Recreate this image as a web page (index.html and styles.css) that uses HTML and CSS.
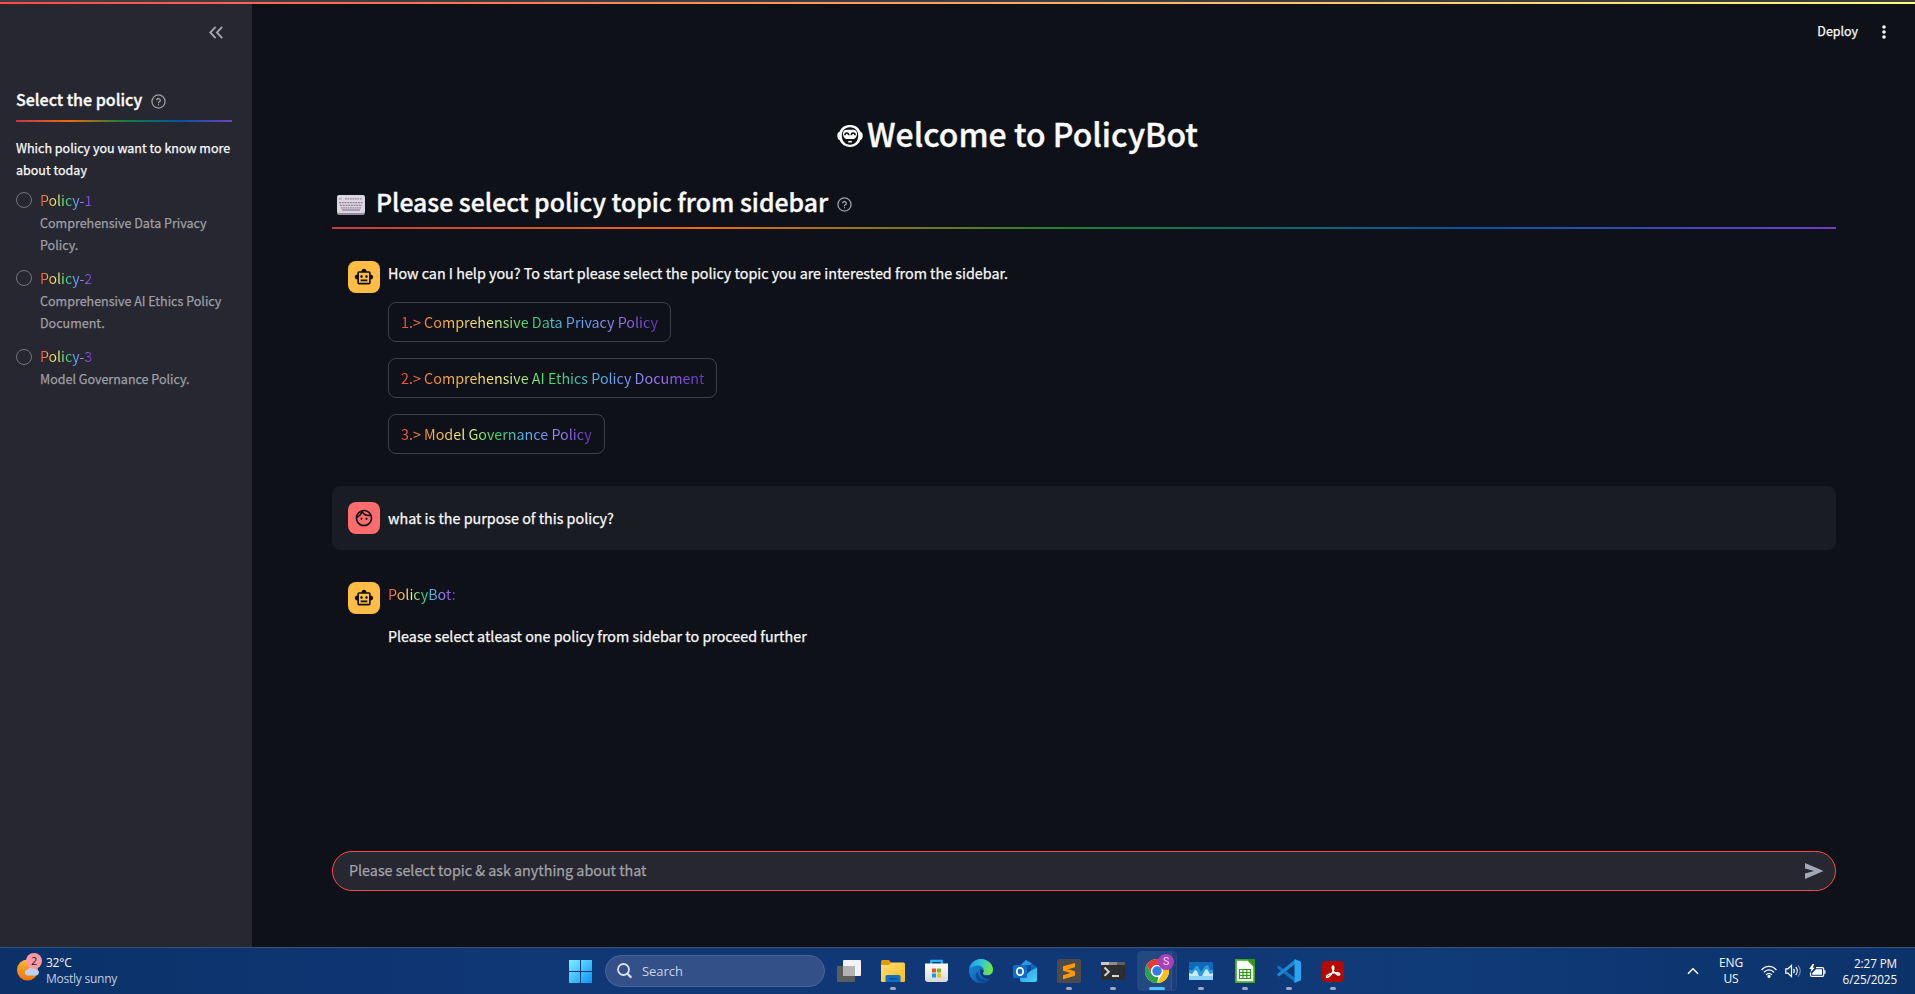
FILE: index.html
```
<!DOCTYPE html>
<html lang="en">
<head>
<meta charset="utf-8">
<title>PolicyBot</title>
<link rel="stylesheet" href="styles.css">
</head>
<body>
<svg width="0" height="0" class="defs" aria-hidden="true">
  <defs>
    <symbol id="i-bot" viewBox="0 0 24 24"><path d="M20 9V7c0-1.1-.9-2-2-2h-3c0-1.66-1.34-3-3-3S9 3.34 9 5H6c-1.1 0-2 .9-2 2v2c-1.66 0-3 1.34-3 3s1.34 3 3 3v4c0 1.1.9 2 2 2h12c1.1 0 2-.9 2-2v-4c1.66 0 3-1.34 3-3s-1.34-3-3-3zm-2 10H6V7h12v12zm-9-6c-.83 0-1.5-.67-1.5-1.5S8.17 10 9 10s1.5.67 1.5 1.5S9.83 13 9 13zm7.5-1.5c0 .83-.67 1.5-1.5 1.5s-1.5-.67-1.5-1.5.67-1.5 1.5-1.5 1.5.67 1.5 1.5zM8 15h8v2H8v-2z"/></symbol>
    <symbol id="i-face" viewBox="0 0 24 24"><path d="M10.25 13c0 .69-.56 1.25-1.25 1.25S7.75 13.69 7.75 13s.56-1.25 1.25-1.25 1.25.56 1.25 1.25zM15 11.75c-.69 0-1.25.56-1.25 1.25s.56 1.25 1.25 1.25 1.25-.56 1.25-1.25-.56-1.25-1.25-1.25zm7 .25c0 5.52-4.48 10-10 10S2 17.52 2 12 6.48 2 12 2s10 4.480 10 10zM10.66 4.120C12.060 6.440 14.600 8 17.500 8c.46 0 .91-.05 1.340-.12C17.440 5.560 14.900 4 12 4c-.46 0-.91.05-1.340.12zM4.420 9.470c1.710-.97 3.030-2.550 3.660-4.440C6.370 6 5.050 7.580 4.420 9.470zM20 12c0-.78-.12-1.530-.33-2.240-.7.15-1.420.24-2.170.24-3.130 0-5.920-1.440-7.760-3.690C8.690 8.870 6.600 10.880 4 11.860c.01.04 0 .09 0 .14 0 4.420 3.580 8 8 8s8-3.580 8-8z"/></symbol>
    <symbol id="i-help" viewBox="0 0 24 24"><g fill="none" stroke="currentColor" stroke-width="2.1" stroke-linecap="round" stroke-linejoin="round"><circle cx="12" cy="12" r="10.500"/><path d="M9.100 9.200a3 3 0 0 1 5.800 1c0 2-2.900 2.500-2.900 3.800M12 17.200v.1"/></g></symbol>
    <linearGradient id="g-win" x1="0" y1="0" x2="1" y2="1"><stop offset="0" stop-color="#7fefff"/><stop offset="1" stop-color="#0a93f5"/></linearGradient>
    <linearGradient id="g-fold" x1="0" y1="0" x2="1" y2="1"><stop offset="0" stop-color="#ffe07a"/><stop offset="1" stop-color="#fdbb18"/></linearGradient>
    <linearGradient id="g-sun" x1="0" y1="0" x2="0" y2="1"><stop offset="0" stop-color="#f7b733"/><stop offset="1" stop-color="#f4720e"/></linearGradient>
    <linearGradient id="g-edge" x1="0" y1="0" x2="1" y2=".3"><stop offset="0" stop-color="#1b9de2"/><stop offset=".55" stop-color="#36c6d0"/><stop offset="1" stop-color="#6fe34c"/></linearGradient>
    <linearGradient id="g-edge2" x1="0" y1="0" x2="1" y2="1"><stop offset="0" stop-color="#1a8fe0"/><stop offset="1" stop-color="#0d4f9e"/></linearGradient>
    <linearGradient id="g-sheet" x1="0" y1="0" x2="0" y2="1"><stop offset="0" stop-color="#fff"/><stop offset="1" stop-color="#d8d8d8"/></linearGradient>
    <linearGradient id="g-ol" x1="0" y1="0" x2="1" y2="1"><stop offset="0" stop-color="#2f8fe0"/><stop offset="1" stop-color="#45d5f5"/></linearGradient>
  </defs>
</svg>

<div class="topline"></div>
<div class="app">
  <aside class="sidebar">
    <div class="collapse"><svg width="14" height="13" viewBox="0 0 14 13" fill="none" stroke="#a3a4ab" stroke-width="1.9"><path d="M6.600.8 1.300 6.500l5.300 5.700M13.200.8 7.900 6.500l5.300 5.700"/></svg></div>
    <h3 class="side-title">Select the policy <svg class="help" width="15" height="15"><use href="#i-help"/></svg></h3>
    <div class="divider"></div>
    <p class="question">Which policy you want to know more about today</p>
    <div class="options">
      <label class="option"><i class="radio"></i><span><b class="rainbow">Policy-1</b><small>Comprehensive Data Privacy Policy.</small></span></label>
      <label class="option"><i class="radio"></i><span><b class="rainbow">Policy-2</b><small>Comprehensive AI Ethics Policy Document.</small></span></label>
      <label class="option"><i class="radio"></i><span><b class="rainbow">Policy-3</b><small>Model Governance Policy.</small></span></label>
    </div>
  </aside>

  <main class="main">
    <header class="toolbar"><span>Deploy</span><svg width="4" height="14" viewBox="0 0 4 14" fill="#fafafa"><circle cx="2" cy="2" r="1.800"/><circle cx="2" cy="7" r="1.800"/><circle cx="2" cy="12" r="1.800"/></svg></header>
    <div class="column">
      <h1 class="title">
        <svg width="26" height="22" viewBox="0 0 26 22"><path fill="#fff" d="M13 0c5.200 0 9 2.700 10.300 6.500 1.600.6 2.400 2.200 2.400 4.300s-.8 3.700-2.300 4.300C21.800 19.300 18 22 13 22S4.200 19.300 2.600 15.100C1.100 14.500.3 12.900.3 10.800s.8-3.700 2.400-4.300C4 2.700 7.800 0 13 0z"/><path fill="#0e1117" d="M13 2.200c5.300 0 8.200 3.500 8.200 8.600s-3 8.900-8.200 8.900-8.200-3.800-8.200-8.900S7.700 2.200 13 2.200z"/><path fill="#fff" d="M10.200 4.800h5.600c2.900 0 4.200 1.500 4.200 3.900S18.800 14 15.800 14h-5.600C7.200 14 6 11.100 6 8.700s1.300-3.900 4.200-3.900z"/><path fill="none" stroke="#0e1117" stroke-width="1.600" d="M7.800 10.200c.2-3 3.800-3 4 0M14.200 10.200c.2-3 3.800-3 4 0"/><path stroke="#fff" stroke-width="1.600" d="M11.200 16.700h3.600"/></svg>
        <span>Welcome to PolicyBot</span>
      </h1>
      <h2 class="subtitle">
        <svg width="28" height="20" viewBox="0 0 28 20"><rect y="1" width="28" height="19" rx="2" fill="#998ba8"/><rect width="28" height="18" rx="2" fill="#dcd5e2"/><g stroke="#8d8594" stroke-width="1.300" fill="none"><path d="M2 3.800h3M8 3.800h17" stroke-dasharray="1.600 .9"/><path d="M2 7.600h24M3 10.400h22" stroke-dasharray="2 .7"/><path d="M4 12.800h20" stroke-dasharray="1.600 .7"/><path d="M5 15h18"/></g></svg>
        <span>Please select policy topic from sidebar</span>
        <svg class="help" width="15" height="15"><use href="#i-help"/></svg>
      </h2>
      <div class="divider"></div>

      <section class="msg">
        <div class="avatar bot"><svg width="20" height="20"><use href="#i-bot"/></svg></div>
        <div class="body">
          <p>How can I help you? To start please select the policy topic you are interested from the sidebar.</p>
          <div class="choices">
            <button class="choice"><span class="rainbow">1.&gt; Comprehensive Data Privacy Policy</span></button>
            <button class="choice"><span class="rainbow">2.&gt; Comprehensive AI Ethics Policy Document</span></button>
            <button class="choice"><span class="rainbow">3.&gt; Model Governance Policy</span></button>
          </div>
        </div>
      </section>
      <section class="msg user">
        <div class="avatar human"><svg width="20" height="20"><use href="#i-face"/></svg></div>
        <div class="body"><p>what is the purpose of this policy?</p></div>
      </section>
      <section class="msg">
        <div class="avatar bot"><svg width="20" height="20"><use href="#i-bot"/></svg></div>
        <div class="body"><p><span class="rainbow">PolicyBot:</span></p><p class="reply">Please select atleast one policy from sidebar to proceed further</p></div>
      </section>

      <div class="prompt"><span>Please select topic &amp; ask anything about that</span><svg width="19" height="16" viewBox="0 0 19 16"><path fill="#a3a8b8" d="M0 0 18.500 8 0 16V10.500L9 8 0 5.500z"/></svg></div>
    </div>
  </main>
</div>

<footer class="taskbar">
  <div class="weather">
    <div class="sun"><svg width="26" height="28" viewBox="0 0 26 28"><circle cx="10.500" cy="17" r="10.500" fill="url(#g-sun)"/><path fill="#b9d4f8" d="M11 22.500a3 3 0 0 1 0-6c1-3.500 7-3.500 8 0 4-.2 4 6 0 6z"/></svg><i class="count">2</i></div>
    <div><div class="temp">32°C</div><div class="cond">Mostly sunny</div></div>
  </div>

  <div class="apps">
    <div class="app-icon start"><svg width="23" height="23" viewBox="0 0 23 23"><path fill="url(#g-win)" d="M0 0h11v11H0zM12 0h11v11H12zM0 12h11v11H0zM12 12h11v11H12z"/></svg></div>
    <div class="search"><svg width="15" height="16" viewBox="0 0 15 16" fill="none" stroke="#dbe3f2" stroke-width="1.800"><circle cx="6.500" cy="6.500" r="5.500"/><path d="m10.500 10.700 3.800 4" stroke-width="2.200"/></svg><span>Search</span></div>
    <div class="app-icon"><svg width="24" height="22" viewBox="0 0 24 22"><rect y="6" width="18" height="16" rx="1" fill="#5c5c5c"/><rect x="6" width="18" height="16" rx="1" fill="#f2f2f2"/><path fill="#b3b3b3" d="M6 6h12v10H6z"/></svg></div>
    <div class="app-icon run"><svg width="24" height="22" viewBox="0 0 24 22"><path fill="#e09a0a" d="M0 1.500A1.500 1.500 0 0 1 1.500 0H8l2 2.500L8 5H0z"/><path fill="url(#g-fold)" d="M0 5h7.500L10 2.500h12.500A1.500 1.500 0 0 1 24 4v17a1 1 0 0 1-1 1H1a1 1 0 0 1-1-1z"/><path fill="#0f6fc5" d="M4.500 22v-5.500A1.500 1.500 0 0 1 6 15h12a1.500 1.500 0 0 1 1.500 1.500V22z"/><path fill="#0b4f94" d="M8 18h8v1.500H8z"/></svg></div>
    <div class="app-icon store"><svg width="23" height="24" viewBox="0 0 23 24"><path d="M6.200 5V1.800h10.600V5" fill="none" stroke="#28b4ee" stroke-width="2.200"/><path fill="url(#g-sheet)" d="M0 4.500h23V20a3 3 0 0 1-3 3H3a3 3 0 0 1-3-3z"/><path fill="#f25022" d="M7 9.500h4v4H7z"/><path fill="#7fba00" d="M12 9.500h4v4h-4z"/><path fill="#00a4ef" d="M7 14.500h4v4H7z"/><path fill="#ffb900" d="M12 14.500h4v4h-4z"/></svg></div>
    <div class="app-icon"><svg width="24" height="24" viewBox="0 0 24 24"><circle cx="12" cy="12" r="12" fill="url(#g-edge2)"/><path fill="url(#g-edge)" d="M.3 9.500C1.500 4 6.300 0 12 0c6.800 0 12 5.200 12 10.500 0 3.500-2.500 5.600-5.600 5.600-2.900 0-4.600-1.200-4.600-2.100 0-.7.900-1.200.9-2.800 0-2.700-2.700-4.700-6.200-4.700C4.800 6.500 1.700 8 .3 9.500z"/><path fill="#0b4a98" d="M9.500 12.500c-1 4.500 3 8.500 7 8.500 2 0 3.800-.6 5.200-1.400C19 23 14 25 10 22.500 5.800 19.800 5.600 13.800 9.500 12.500z"/><path fill="#103877" d="M11.200 10.500c2.100-.5 3.500.7 3.500 1.800 0 1-.9 1.300-.9 2.100 0 1.500 2.500 2.700 5.500 2.200 1.800-.3 3.300-1.200 4.300-2.200-.3 1.900-1 3.600-1.900 5.200-5.500 1.400-11.900-2.200-10.500-9.100z"/></svg></div>
    <div class="app-icon"><svg width="24" height="22" viewBox="0 0 24 22"><path fill="#1267b8" d="m5 7 8-7 11 7v6H5z"/><path fill="#2b96e8" d="m8 5 5-5 6 3.500L10 9z"/><path fill="url(#g-ol)" d="m24 7.500-17 9V20a2 2 0 0 0 2 2h13a2 2 0 0 0 2-2z"/><path fill="#0d4a9c" d="M13 5h5v5l-4 4z"/><rect y="5" width="14" height="13" rx="1.500" fill="#0f6cc8"/><ellipse cx="7" cy="11.500" rx="3.200" ry="3.600" fill="none" stroke="#fff" stroke-width="1.800"/></svg></div>
    <div class="app-icon run"><svg width="24" height="24" viewBox="0 0 24 24"><rect width="24" height="24" rx="1.500" fill="#4b4b4b"/><path fill="#ff9800" d="M18 4v4.200L11 10.300l7 2v4.500L6 20.200v-4l7.500-2.300L6 11.800V7.300z"/></svg></div>
    <div class="app-icon run"><svg width="24" height="18" viewBox="0 0 24 18"><rect width="24" height="18" rx="1" fill="#2e2e30"/><path fill="#c8c8c8" d="M0 0h8v3H0z"/><path fill="#8c8c8c" d="M8 0h8v3H8z"/><path fill="#5e5e5e" d="M16 0h8v3h-8z"/><path d="m3.500 5.500 4.300 4.200-4.300 4.200" fill="none" stroke="#d5d5d5" stroke-width="2"/><path d="M11 14h7" stroke="#fff" stroke-width="1.600"/></svg></div>
    <div class="app-icon active"><svg width="24" height="24" viewBox="0 0 24 24"><circle cx="12" cy="12" r="12" fill="#fff"/><path fill="#e33b2e" d="M1.600 6A12 12 0 0 1 22.400 6H12a6 6 0 0 0-5.200 9z"/><path fill="#fbc116" d="M22.400 6A12 12 0 0 1 12 24l5.200-9A6 6 0 0 0 17.200 9L15.500 6z"/><path fill="#2aa14c" d="M1.600 6 6.800 15A6 6 0 0 0 13.500 17.800L12 24A12 12 0 0 1 1.600 6z"/><circle cx="12" cy="12" r="6" fill="#fff"/><circle cx="12" cy="12" r="4.700" fill="#2f7bea"/></svg><i class="profile">S</i></div>
    <div class="app-icon run"><svg width="24" height="18" viewBox="0 0 24 18"><rect width="24" height="18" rx="1" fill="#0d6ab8"/><path fill="#2b9bdc" d="M0 8h4l3-4h2l3 6 4-6 3-1 2 5h3v10H0z"/><path fill="#c9ebfc" d="m0 11 3 1 3-4 2 1 2 5 3 0 3-6 2-1 3 5 3-1v7H0z"/><path fill="#8fd3f7" d="M0 14h24v4H0z"/></svg></div>
    <div class="app-icon run"><svg width="20" height="24" viewBox="0 0 20 24"><path fill="#fff" stroke="#3faa1e" stroke-width="1.800" d="M.9.900H13L19.100 7.500v15.600H.9z"/><path fill="#2f9412" d="M13 0h7v7.500z"/><path fill="none" stroke="#2f9a14" stroke-width="1.200" d="M4.500 10.500h11v9h-11zM4.500 13.500h11M4.500 16.500h11M8 10.500v9M11.800 10.500v9"/></svg></div>
    <div class="app-icon run"><svg width="24" height="24" viewBox="0 0 24 24"><path fill="#1173bd" d="m0 8.200 2-1.700L18 19v4.500L.2 9z"/><path fill="#1a8ad6" d="m0 15.800 2 1.700L18 5V.5L.2 15z"/><path fill="#2aa5f2" d="M17.500 0 24 2.800v18.400L17.500 24z"/></svg></div>
    <div class="app-icon run"><svg width="22" height="21" viewBox="0 0 22 21"><rect width="22" height="21" rx="4" fill="#b30b00"/><path fill="none" stroke="#fff" stroke-width="1.500" d="M4.500 15.800c-.4-1.600 4-3.500 7.500-4 3.600-.4 6 .2 5.800 1.500-.4 1.900-4.800-.3-6.500-3.300-1.100-2-1.400-5-.3-5s1 3-.2 5.700c-1.500 3.400-5.400 6.900-6.300 5.100z"/></svg></div>
  </div>

  <div class="tray">
    <svg width="12" height="8" viewBox="0 0 12 8" fill="none" stroke="#fff" stroke-width="1.500"><path d="m1 6.800 5-5 5 5"/></svg>
    <div class="lang"><div>ENG</div><div>US</div></div>
    <div class="status">
      <svg width="16" height="13" viewBox="0 0 16 13" fill="none" stroke="#fff" stroke-width="1.300"><path d="M.6 5C4.700.2 11.300.2 15.400 5M3 7.400c2.800-3.400 7.200-3.400 10 0M5.200 9.800c1.600-2 4-2 5.600 0"/><circle cx="8" cy="11.300" r="1" fill="#fff"/></svg>
      <svg width="16" height="14" viewBox="0 0 16 14" fill="none" stroke="#fff" stroke-width="1.200"><path d="M.8 4.800H3L6.500 1.500v11L3 9.200H.8zM8.500 4.800c1 1.300 1 3.100 0 4.400M10.700 3c2 2.300 2 5.700 0 8"/><path d="M13 1.300c3 3.300 3 8.100 0 11.400" stroke="#6f89b6"/></svg>
      <svg width="17" height="14" viewBox="0 0 17 14"><path fill="none" stroke="#fff" stroke-width="1.200" d="M7 3.600h6.200a1.500 1.500 0 0 1 1.500 1.500v5.800a1.500 1.500 0 0 1-1.500 1.500H3a1.500 1.500 0 0 1-1.500-1.500V8.500"/><path fill="#fff" d="M7 5.300h6v5.400H3.200V9zM15.200 6.300H16.500v3.400h-1.300zM3.600 0 .3 5h2L1.600 8.300 5.800 3.800H3.700L5.300 0z"/></svg>
    </div>
    <div class="clock"><div>2:27 PM</div><div>6/25/2025</div></div>
  </div>
</footer>
</body>
</html>
```
FILE: styles.css
```
* { box-sizing: border-box; }
body {
  margin: 0;
  height: 994px;
  overflow: hidden;
  display: flex;
  flex-direction: column;
  background: #0e1117;
  color: #fafafa;
  font: 400 14.320px/24px "Noto Sans CJK SC", "Noto Sans", sans-serif;
}
.app { -webkit-text-stroke: .25px; }
h1, h2, h3, p { margin: 0; font-weight: 500; }
h1, h2, h3 { -webkit-text-stroke: .35px; }
p { font-weight: 400; }
svg { display: block; flex: none; }
.defs { position: absolute; }

.topline {
  flex: none;
  height: 4px;
  border-top: 2px solid #3e3d3e;
  background: linear-gradient(90deg, #ff4b4b, #fffd80);
}
.app { flex: 1; display: flex; min-height: 0; }

.divider {
  height: 2px;
  background: linear-gradient(90deg, #c23b41, #ec6a10 25%, #158237 50%, #0054a3 75%, #6f3fc4);
}
.rainbow {
  font-weight: 400;
  color: transparent;
  -webkit-text-stroke: 0;
  background: linear-gradient(90deg, #f24a45, #f8ae3e, #f5f58a, #3dd56d, #5aabf5, #a07df5, #6732bb);
  -webkit-background-clip: text;
  background-clip: text;
}
.help { color: #a0a0a4; }

/* Sidebar */
.sidebar { width: 252px; padding: 22px 20px 0 16px; background: #262730; }
.collapse { height: 56px; display: flex; justify-content: flex-end; padding-right: 9px; }
.side-title {
  display: flex;
  align-items: center;
  gap: 9px;
  height: 38px;
  padding-bottom: 4px;
  font-size: 16.050px;
  line-height: 34px;
}
.side-title .help { margin-top: 4px; }
.question { margin-top: 15px; font-size: 12.530px; line-height: 22.400px; }
.options { display: flex; flex-direction: column; gap: 9.500px; margin-top: 5.700px; }
.option { display: flex; gap: 8px; }
.option span { display: block; }
.option .rainbow { display: block; width: max-content; font-size: 14.100px; }
.option small { display: block; font-size: 12.530px; line-height: 22.400px; color: #9f9fa4; }
.radio {
  flex: none;
  width: 16px;
  height: 16px;
  margin-top: 4.500px;
  border: 1px solid #74757c;
  border-radius: 50%;
}

/* Main column */
.main { flex: 1; display: flex; flex-direction: column; }
.toolbar {
  height: 56px;
  padding-right: 29px;
  display: flex;
  align-items: center;
  justify-content: flex-end;
  gap: 24px;
  font-size: 12.450px;
}
.toolbar span { margin-top: -2px; }
.column { flex: 1; display: flex; flex-direction: column; padding: 52px 79px 56px 80px; }
.title {
  display: flex;
  justify-content: center;
  align-items: center;
  gap: 4px;
  height: 43px;
  padding-right: 133px;
  font-size: 31.940px;
  line-height: 43px;
}
.title svg { margin-top: 4px; }
.subtitle {
  display: flex;
  align-items: center;
  height: 72px;
  padding: 25px 0 0 5px;
  font-size: 24.790px;
  line-height: 40px;
}
.subtitle span { margin: -5px 9px 0 11px; }
.subtitle .help { margin-top: 1px; }
.subtitle svg { margin-top: 3px; }
.column > .divider { margin-bottom: 16px; flex: none; }

.msg { display: flex; gap: 8px; padding: 16px; border-radius: 8px; }
.msg + .msg { margin-top: 16px; }
.msg.user { background: #1a1c24; }
.msg.user p { padding-top: 4px; }
.avatar {
  width: 32px;
  height: 32px;
  flex: none;
  display: flex;
  align-items: center;
  justify-content: center;
  border-radius: 8px;
}
.avatar svg { fill: #0e1117; }
.avatar.bot { background: #ffbd45; }
.avatar.human { background: #ff6c6c; }
.choices { display: flex; flex-direction: column; align-items: flex-start; gap: 16px; margin-top: 17px; }
.choice {
  height: 40px;
  padding: 0 12px;
  border: 1px solid #3e4045;
  border-radius: 8px;
  background: none;
  font: inherit;
}
.reply { margin-top: 18px; }
.prompt {
  height: 40px;
  margin-top: auto;
  padding: 0 11px 0 16px;
  display: flex;
  align-items: center;
  justify-content: space-between;
  border: 1px solid #ff4b4b;
  border-radius: 20px;
  background: #262730;
  color: #a3a3a8;
}
.prompt span { margin-top: -3px; }

/* Desktop taskbar */
.taskbar {
  flex: none;
  position: relative;
  height: 47px;
  display: flex;
  align-items: center;
  justify-content: space-between;
  border-top: 1px solid #3c5274;
  background: linear-gradient(90deg, #0b3168, #103877 30%, #103877 65%, #0f3b78 75%, #0c326a);
  font: 12px/16px "Open Sans", "Noto Sans", sans-serif;
}
.weather { display: flex; gap: 3px; padding-left: 17px; width: 560px; letter-spacing: -.24px; }
.cond { color: #c0cde0; font-size: 12px; }
.sun { position: relative; margin-top: -2px; }
.count {
  position: absolute;
  top: 0;
  left: 9px;
  width: 16px;
  height: 16px;
  border-radius: 50%;
  background: #ff99a4;
  color: #221;
  font-style: normal;
  font-size: 11px;
  text-align: center;
}
.apps { display: flex; flex: 1; align-items: center; height: 46px; }
.app-icon {
  position: relative;
  width: 44px;
  height: 40px;
  display: flex;
  align-items: center;
  justify-content: center;
}
.store { padding-right: 1px; }
.start { width: 40px; margin-right: 5px; }
.run::after, .active::after {
  content: "";
  position: absolute;
  bottom: 1px;
  left: 19px;
  width: 6px;
  height: 3px;
  border-radius: 2px;
  background: #9aa8c6;
}
.active::before {
  content: "";
  position: absolute;
  inset: 0 2px 0 2px;
  border: 1px solid #24467f;
  border-radius: 4px;
  background: linear-gradient(90deg, #ffffff14 33px, #ffffff26 33px 34px, #ffffff0a 34px);
}
.active svg { position: relative; }
.active::after { left: 14px; width: 16px; background: #4cc2ff; }
.profile {
  position: absolute;
  top: 3px;
  left: 23px;
  width: 16px;
  height: 16px;
  border-radius: 50%;
  background: #a840b8;
  color: #f3d9f8;
  font: 10.500px/16px Roboto, sans-serif;
  text-align: center;
}
.search {
  width: 220px;
  height: 32px;
  margin-right: 2px;
  padding-left: 11px;
  display: flex;
  align-items: center;
  gap: 10px;
  border: 1px solid #4a659a;
  border-radius: 16px;
  background: #335088;
  color: #c8d2e5;
  font-size: 12.950px;
}
.tray { display: flex; align-items: center; padding-right: 18px; text-align: center; letter-spacing: -.1px; }
.lang { width: 24px; margin: 0 18px 0 20px; }
.lang, .clock { margin-top: -1px; }
.status { display: flex; gap: 8px; align-items: center; margin-right: 14px; }
.clock { width: 57px; text-align: right; font-size: 11.700px; white-space: nowrap; }
```
